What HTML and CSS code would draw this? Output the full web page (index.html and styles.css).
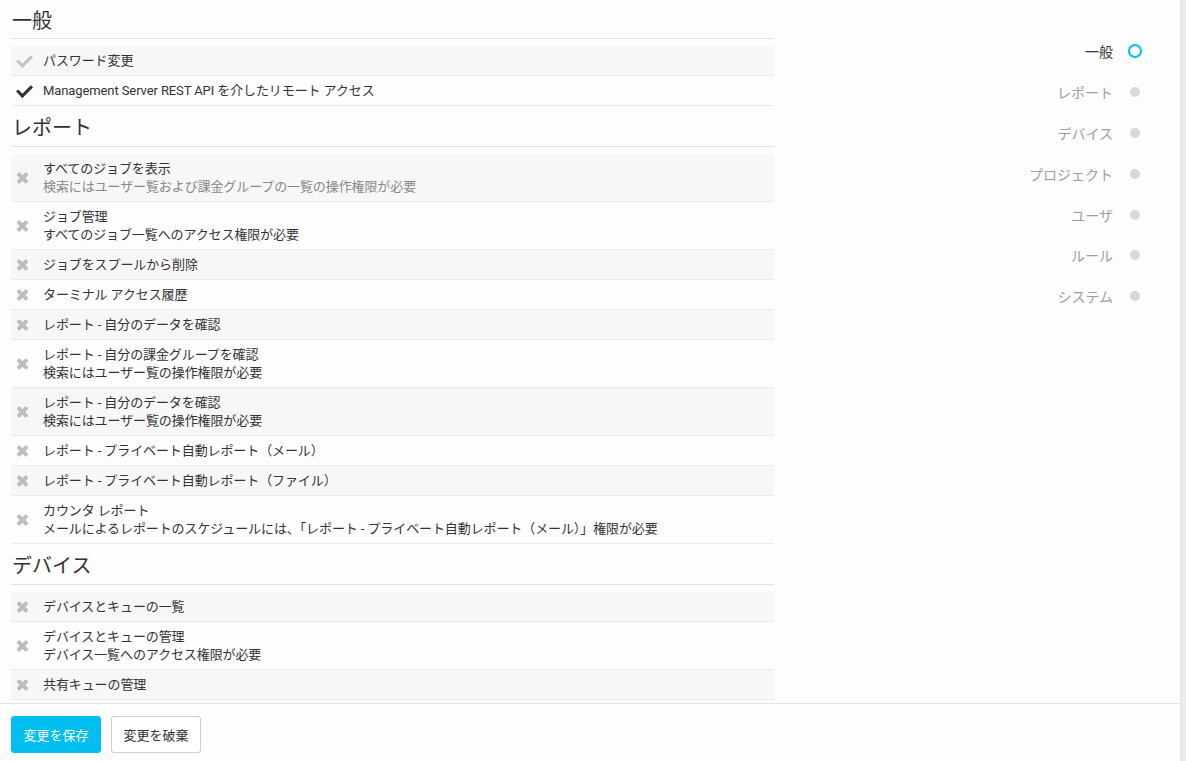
FILE: index.html
```html
<!DOCTYPE html>
<html lang="ja">
<head>
<meta charset="utf-8">
<link rel="stylesheet" href="styles.css">
</head>
<body>
<div class="app">
  <div class="page">
    <div class="content">
      <div class="main">
        <h2 class="section-title first">一般</h2>
        <ul class="list">
          <li class="row"><span class="icon check light"></span><div class="text"><div>パスワード変更</div></div></li>
          <li class="row"><span class="icon check"></span><div class="text"><div>Management Server REST API を介したリモート アクセス</div></div></li>
        </ul>
        <h2 class="section-title">レポート</h2>
        <ul class="list">
          <li class="row"><span class="icon cross"></span><div class="text"><div>すべてのジョブを表示</div><div class="muted">検索にはユーザー覧および課金グループの一覧の操作権限が必要</div></div></li>
          <li class="row"><span class="icon cross"></span><div class="text"><div>ジョブ管理</div><div>すべてのジョブ一覧へのアクセス権限が必要</div></div></li>
          <li class="row"><span class="icon cross"></span><div class="text"><div>ジョブをスプールから削除</div></div></li>
          <li class="row"><span class="icon cross"></span><div class="text"><div>ターミナル アクセス履歴</div></div></li>
          <li class="row"><span class="icon cross"></span><div class="text"><div>レポート - 自分のデータを確認</div></div></li>
          <li class="row"><span class="icon cross"></span><div class="text"><div>レポート - 自分の課金グループを確認</div><div>検索にはユーザー覧の操作権限が必要</div></div></li>
          <li class="row"><span class="icon cross"></span><div class="text"><div>レポート - 自分のデータを確認</div><div>検索にはユーザー覧の操作権限が必要</div></div></li>
          <li class="row"><span class="icon cross"></span><div class="text"><div>レポート - プライベート自動レポート（メール）</div></div></li>
          <li class="row"><span class="icon cross"></span><div class="text"><div>レポート - プライベート自動レポート（ファイル）</div></div></li>
          <li class="row"><span class="icon cross"></span><div class="text"><div>カウンタ レポート</div><div>メールによるレポートのスケジュールには、「レポート - プライベート自動レポート（メール）」権限が必要</div></div></li>
        </ul>
        <h2 class="section-title">デバイス</h2>
        <ul class="list">
          <li class="row"><span class="icon cross"></span><div class="text"><div>デバイスとキューの一覧</div></div></li>
          <li class="row"><span class="icon cross"></span><div class="text"><div>デバイスとキューの管理</div><div>デバイス一覧へのアクセス権限が必要</div></div></li>
          <li class="row"><span class="icon cross"></span><div class="text"><div>共有キューの管理</div></div></li>
        </ul>
      </div>
      <nav class="nav">
        <a class="nav-item active"><span class="nav-label">一般</span><span class="dot"></span></a>
        <a class="nav-item"><span class="nav-label">レポート</span><span class="dot"></span></a>
        <a class="nav-item"><span class="nav-label">デバイス</span><span class="dot"></span></a>
        <a class="nav-item"><span class="nav-label">プロジェクト</span><span class="dot"></span></a>
        <a class="nav-item"><span class="nav-label">ユーザ</span><span class="dot"></span></a>
        <a class="nav-item"><span class="nav-label">ルール</span><span class="dot"></span></a>
        <a class="nav-item"><span class="nav-label">システム</span><span class="dot"></span></a>
      </nav>
    </div>
    <div class="footer">
      <button class="btn primary">変更を保存</button>
      <button class="btn">変更を破棄</button>
    </div>
  </div>
  <div class="scrollbar"></div>
</div>
</body>
</html>
```
FILE: styles.css
```css
html, body {
  margin: 0;
  padding: 0;
  height: 100%;
}
body {
  background: #fdfdfd;
  color: #333;
  font-family: Roboto, "Noto Sans CJK JP", sans-serif;
  font-size: 13px;
  overflow: hidden;
}
.app {
  display: flex;
  height: 761px;
}
.page {
  flex: 1;
  display: flex;
  flex-direction: column;
  min-width: 0;
}
.scrollbar {
  width: 5px;
  background: #ebebeb;
  border-left: 1px solid #e3e3e3;
}
.content {
  flex: 1;
  display: flex;
  overflow: hidden;
}
.main {
  width: 763px;
  margin-left: 11px;
  flex: none;
}
.section-title {
  margin: 0;
  height: 40px;
  box-sizing: content-box;
  border-bottom: 1px solid #e2e2e2;
  font-size: 20px;
  font-weight: 400;
  line-height: 44px;
  color: #333;
  padding-left: 1px;
}
.section-title.first {
  height: 38px;
  line-height: 42px;
}
.list {
  list-style: none;
  margin: 7px 0 0;
  padding: 0;
}
.row {
  display: flex;
  align-items: center;
  min-height: 29px;
  border-bottom: 1px solid #ebebeb;
  box-sizing: content-box;
}
.row:nth-child(odd) {
  background: #f7f7f7;
}
.row .text {
  line-height: 18px;
  padding: 6px 0 5px;
  color: #333;
  letter-spacing: -0.1px;
}
.row .text .muted {
  color: #888;
}
.icon {
  width: 32px;
  flex: none;
  position: relative;
  height: 14px;
}
.icon.check::before {
  content: "";
  position: absolute;
  left: 6px;
  top: 1px;
  width: 12px;
  height: 6px;
  border-left: 3px solid #333;
  border-bottom: 3px solid #333;
  transform: rotate(-45deg);
}
.icon.check.light::before {
  border-color: #c4c4c4;
}
.icon.cross::before,
.icon.cross::after {
  content: "";
  position: absolute;
  left: 5px;
  top: 5px;
  width: 13px;
  height: 4px;
  border-radius: 1px;
  background: #bdbdbd;
  transform: rotate(45deg);
}
.icon.cross::after {
  transform: rotate(-45deg);
}
.nav {
  flex: 1;
  display: flex;
  flex-direction: column;
  align-items: flex-end;
  padding-top: 31px;
  padding-right: 38px;
}
.nav-item {
  display: flex;
  align-items: center;
  height: 40.8px;
  font-size: 14px;
  color: #9aa0a8;
}
.nav-item.active {
  color: #333;
}
.nav-label {
  margin-right: 15px;
}
.dot {
  width: 14px;
  height: 14px;
  display: flex;
  align-items: center;
  justify-content: center;
}
.dot::before {
  content: "";
  width: 10px;
  height: 10px;
  border-radius: 50%;
  background: #d6d8db;
}
.nav-item.active .dot::before {
  width: 10px;
  height: 10px;
  background: transparent;
  border: 2px solid #00bff0;
}
.footer {
  flex: none;
  height: 58px;
  border-top: 1px solid #e4e4e4;
  display: flex;
  align-items: flex-start;
  padding: 12px 0 0 11px;
  box-sizing: border-box;
  gap: 10px;
  background: #fdfdfd;
}
.btn {
  height: 37px;
  width: 90px;
  padding: 0;
  border: 1px solid #cfcfcf;
  border-radius: 3px;
  background: #fff;
  color: #333;
  font-family: Roboto, "Noto Sans CJK JP", sans-serif;
  font-size: 13px;
}
.btn.primary {
  background: #00bff0;
  border-color: #00bff0;
  color: #fff;
}
```
